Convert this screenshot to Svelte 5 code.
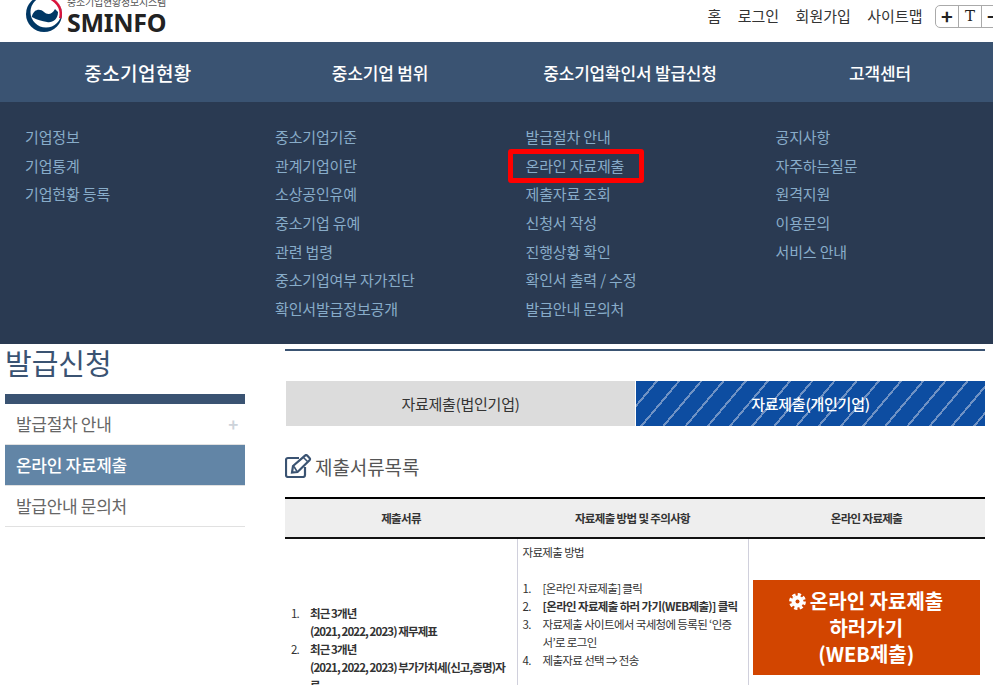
<script>
	const util = ['홈', '로그인', '회원가입', '사이트맵'];
	const mainNav = ['중소기업현황', '중소기업 범위', '중소기업확인서 발급신청', '고객센터'];
	const subNav = [
		['기업정보', '기업통계', '기업현황 등록'],
		['중소기업기준', '관계기업이란', '소상공인유예', '중소기업 유예', '관련 법령', '중소기업여부 자가진단', '확인서발급정보공개'],
		['발급절차 안내', '온라인 자료제출', '제출자료 조회', '신청서 작성', '진행상황 확인', '확인서 출력 / 수정', '발급안내 문의처'],
		['공지사항', '자주하는질문', '원격지원', '이용문의', '서비스 안내']
	];
</script>

<div class="page">
	<header class="top">
		<div class="logo">
			<svg class="mark" width="36" height="36" viewBox="0 0 36 36">
				<circle cx="18" cy="18" r="18" fill="#003764" />
				<circle cx="20" cy="16" r="15.500" fill="#fff" />
				<path d="M6 20C8 13 14 12 18 16C21 19 26 19 29 13L32 16C32 24 26 27 21 26C16 25 11 24 6 21z" fill="#003764" />
				<path d="M12.300 2.300A16.700 16.700 0 0 1 34.100 22.300" fill="none" stroke="#d9143c" stroke-width="2.500" />
			</svg>
			<div class="logo-text">
				<span class="logo-sub">중소기업현황정보시스템</span>
				<span class="logo-name">SMINFO</span>
			</div>
		</div>
		<nav class="util">
			{#each util as item}
				<span>{item}</span>
			{/each}
			<div class="zoom">
				<b>+</b><i>T</i><b>−</b>
			</div>
		</nav>
	</header>

	<div class="main-nav">
		{#each mainNav as item}
			<div class="main-item">{item}</div>
		{/each}
	</div>

	<div class="mega">
		{#each subNav as col}
			<ul>
				{#each col as item}
					<li class:marked={item === '온라인 자료제출'}>{item}</li>
				{/each}
			</ul>
		{/each}
	</div>

	<div class="body">
		<aside class="side">
			<h1>발급신청</h1>
			<div class="side-bar"></div>
			<div class="side-item first">발급절차 안내<em>+</em></div>
			<div class="side-item active">온라인 자료제출</div>
			<div class="side-item">발급안내 문의처</div>
		</aside>

		<main class="content">
			<div class="tabs">
				<div class="tab">자료제출(법인기업)</div>
				<div class="tab on">자료제출(개인기업)</div>
			</div>

			<h2>
				<svg width="27" height="24" viewBox="0 0 27 24" fill="none" stroke="#3a5372" stroke-width="2.200">
					<path d="M14 4H3a2 2 0 0 0-2 2v15a2 2 0 0 0 2 2h15a2 2 0 0 0 2-2v-8" />
					<path d="M8 12 20 1.600a1.600 1.600 0 0 1 2.200 0l2.300 2.400a1.600 1.600 0 0 1 0 2.200L12.500 18 7 18.500z" />
					<path d="M18.500 3.500 23 8M9 12.500l3 5" stroke-width="1.500" />
				</svg>
				제출서류목록
			</h2>

			<table>
				<colgroup>
					<col class="c1" />
					<col class="c2" />
					<col class="c3" />
				</colgroup>
				<thead>
					<tr>
						<th>제출서류</th>
						<th>자료제출 방법 및 주의사항</th>
						<th>온라인 자료제출</th>
					</tr>
				</thead>
				<tbody>
					<tr>
						<td class="docs">
							<ol>
								<li>최근 3개년<br />(2021, 2022, 2023) 재무제표</li>
								<li>최근 3개년<br />(2021, 2022, 2023) 부가가치세(신고,증명)자료</li>
							</ol>
						</td>
						<td class="how">
							<p>자료제출 방법</p>
							<ol>
								<li>[온라인 자료제출] 클릭</li>
								<li><strong>[온라인 자료제출 하러 가기(WEB제출)] 클릭</strong></li>
								<li>자료제출 사이트에서 국세청에 등록된 ‘인증서’로 로그인</li>
								<li>제출자료 선택 ⇒ 전송</li>
							</ol>
						</td>
						<td class="action">
							<div class="go">
								<svg width="17" height="17" viewBox="0 0 17 17">
									<circle cx="8.500" cy="8.500" r="6" fill="#fff" />
									<circle cx="8.500" cy="8.500" r="7" fill="none" stroke="#fff" stroke-width="2.800" stroke-dasharray="3.300 2.200" />
									<circle cx="8.500" cy="8.500" r="2" fill="#d24500" />
								</svg>
								온라인 자료제출<br />하러가기<br />(WEB제출)
							</div>
						</td>
					</tr>
				</tbody>
			</table>
		</main>
	</div>
</div>

<style>
	:global(body) {
		margin: 0;
		background: #fff;
		overflow: hidden;
	}

	.page {
		width: 993px;
		height: 685px;
		overflow: hidden;
		font-family: 'Noto Sans CJK KR', 'Noto Sans', sans-serif;
	}

	.top {
		height: 42px;
		display: flex;
		justify-content: space-between;
		overflow: hidden;
	}

	.logo {
		display: flex;
		gap: 5px;
		margin: -4px 0 0 26px;
	}

	.logo-text {
		display: flex;
		flex-direction: column;
	}

	.logo-sub {
		font-size: 10px;
		line-height: 11px;
		letter-spacing: -0.2px;
		color: #555;
	}

	.logo-name {
		margin-top: 4px;
		font-family: 'Noto Sans', sans-serif;
		font-size: 25px;
		line-height: 22px;
		font-weight: 700;
		letter-spacing: -0.3px;
		color: #222;
	}

	.util {
		display: flex;
		align-items: flex-start;
		margin: 5px -22px 0 0;
		font-size: 15px;
		line-height: 22px;
		color: #333;
	}

	.util span {
		margin-right: 16.500px;
	}

	.zoom {
		display: flex;
		width: 80px;
		height: 23px;
		box-sizing: border-box;
		border: 1px solid #aaa;
		border-radius: 5px;
		margin-left: -4px;
	}

	.zoom b,
	.zoom i {
		width: 22px;
		text-align: center;
		font-style: normal;
		border-right: 1px solid #aaa;
		color: #222;
		font-size: 20px;
		line-height: 20px;
	}

	.zoom i {
		font-family: 'DejaVu Serif', serif;
		font-size: 15px;
	}

	.main-nav {
		height: 60px;
		display: grid;
		grid-template-columns: 255px 250px 250px 250px;
		align-items: center;
		background: #3a5372;
		color: #fff;
		font-size: 17px;
		font-weight: 500;
		letter-spacing: -0.2px;
		text-align: center;
		white-space: nowrap;
	}

	.main-item:first-child {
		padding-left: 21px;
		font-size: 19px;
		letter-spacing: 0.4px;
	}

	.mega {
		height: 242px;
		box-sizing: border-box;
		padding: 20.800px 0 0 25px;
		display: grid;
		grid-template-columns: 250px 250.500px 250px 250px;
		background: #2a3a52;
	}

	.mega ul {
		list-style: none;
		margin: 0;
		padding: 0;
	}

	.mega li {
		position: relative;
		font-size: 15px;
		line-height: 28.700px;
		letter-spacing: -0.15px;
		color: #88acc9;
		white-space: nowrap;
	}

	.marked::after {
		content: '';
		position: absolute;
		left: -18px;
		top: -3px;
		width: 126px;
		height: 24px;
		border: 5px solid #f00;
		border-radius: 3px;
	}

	.body {
		display: flex;
		padding-left: 5px;
	}

	.side {
		width: 240px;
		margin-right: 40px;
		flex-shrink: 0;
	}

	h1 {
		margin: 0;
		height: 50px;
		font-size: 29px;
		line-height: 36px;
		font-weight: 400;
		color: #3a5372;
	}

	.side-bar {
		height: 10px;
		background: #3a5372;
	}

	.side-item {
		display: flex;
		justify-content: space-between;
		height: 40px;
		padding: 0 7px 0 11px;
		border-bottom: 1px solid #e1e1e1;
		font-size: 17px;
		line-height: 39px;
		letter-spacing: -0.3px;
		color: #666;
	}

	.side-item em {
		font-style: normal;
		font-weight: 700;
		color: #cdd3da;
	}

	.side-item.active {
		background: #6285a6;
		color: #fff;
		font-weight: 500;
	}

	.content {
		width: 700px;
		flex-shrink: 0;
		margin-top: 5px;
		border-top: 2px solid #3a5372;
	}

	.tabs {
		display: flex;
		gap: 1px;
		margin: 30px 0 0 1px;
	}

	.tab {
		flex: 1;
		height: 45px;
		background: #dcdcdc;
		text-align: center;
		font-size: 15px;
		line-height: 45px;
		color: #333;
		letter-spacing: -0.25px;
	}

	.tab.on {
		background: repeating-linear-gradient(130deg, #0d4da1 0 15px, #6f92c4 15px 17px);
		color: #fff;
		font-weight: 500;
	}

	h2 {
		display: flex;
		align-items: center;
		gap: 3px;
		margin: 27px 0 0;
		height: 26px;
		font-size: 19px;
		font-weight: 400;
		letter-spacing: -0.1px;
		color: #555;
	}

	table {
		width: 700px;
		margin-top: 18px;
		border-collapse: collapse;
		table-layout: fixed;
		font-size: 11.500px;
		letter-spacing: -0.65px;
		color: #333;
	}

	.c1 {
		width: 232px;
	}

	.c2 {
		width: 231px;
	}

	.c3 {
		width: 237px;
	}

	th {
		height: 38px;
		padding: 0;
		background: #eee;
		border-top: 2px solid #000;
		border-bottom: 2px solid #111;
		font-size: 11.500px;
		font-weight: 700;
	}

	td {
		height: 178px;
		padding: 0;
		border-left: 1px solid #d0d0dc;
	}

	td:first-child {
		border-left: 0;
	}

	ol {
		margin: 0;
		padding: 0 5px 0 25px;
		list-style: none;
		counter-reset: item;
	}

	li {
		line-height: 18px;
		counter-increment: item;
	}

	ol li::before {
		content: counter(item) '.';
		display: inline-block;
		width: 19px;
		margin-left: -19px;
		font-weight: 400;
	}

	.docs {
		vertical-align: middle;
		font-weight: 700;
		letter-spacing: -0.9px;
		word-break: break-all;
	}

	.docs ol {
		padding-right: 9px;
	}

	.how {
		vertical-align: top;
		padding: 4px 5px 0;
	}

	.how p {
		margin: 0 0 18px;
		line-height: 18px;
	}

	.how ol {
		padding: 0 0 0 20px;
	}

	.how ol li::before {
		width: 20px;
		margin-left: -20px;
	}

	.action {
		vertical-align: top;
		padding: 41px 5px 0 4px;
	}

	.go {
		height: 95px;
		box-sizing: border-box;
		padding-top: 8px;
		background: #d24500;
		text-align: center;
		color: #fff;
		font-size: 20px;
		line-height: 26.500px;
		font-weight: 700;
		letter-spacing: 0;
	}

	.go svg {
		vertical-align: -1px;
		margin-right: -1px;
	}
</style>
